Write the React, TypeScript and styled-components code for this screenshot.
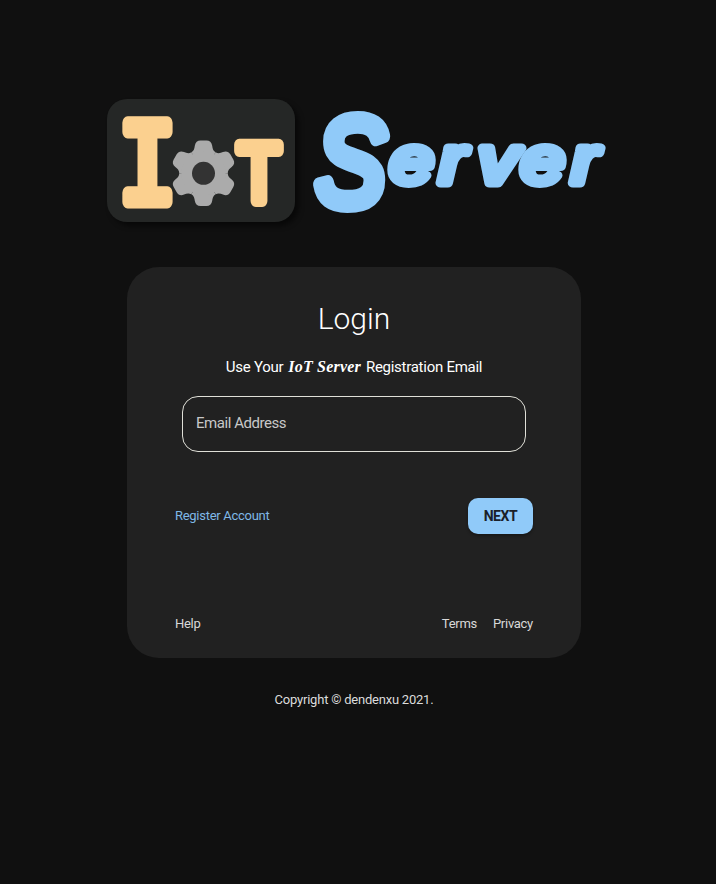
import React from "react";
import styled, { createGlobalStyle } from "styled-components";

const GlobalStyle = createGlobalStyle`
  * { box-sizing: border-box; }
  html, body { margin: 0; padding: 0; background: #101010; }
  body { font-family: Roboto, "Liberation Sans", sans-serif; color: #fff; }
`;

const Page = styled.main`
  width: 708px;
  min-height: 884px;
  padding-top: 99px;
  display: flex;
  flex-direction: column;
  align-items: center;
`;

const Brand = styled.header`
  display: flex;
  gap: 13px;
  width: 494px;
  height: 123px;
`;

const Emblem = styled.div`
  flex: none;
  width: 188px;
  height: 123px;
  border-radius: 20px;
  background: #252726;
  box-shadow: 4px 4px 5px rgba(0, 0, 0, 0.5);
`;

const Drawing = styled.svg`
  display: block;
  flex: none;
  overflow: visible;
`;

const Slab = styled.text`
  fill: #fbd08f;
  stroke: #fbd08f;
  stroke-linejoin: round;
`;

const Script = styled.text`
  fill: #90caf9;
  stroke: #90caf9;
  stroke-linejoin: round;
  stroke-linecap: round;
  font-family: "Liberation Sans", Arial, sans-serif;
  font-style: italic;
`;

const Card = styled.section`
  width: 454px;
  height: 391px;
  margin-top: 45px;
  padding: 33px 48px 0;
  border-radius: 32px;
  background: #212121;
`;

const Title = styled.h1`
  margin: 0;
  font-size: 30px;
  line-height: 38px;
  font-weight: 300;
  text-align: center;
`;

const Subtitle = styled.p`
  display: flex;
  justify-content: center;
  align-items: center;
  gap: 5px;
  height: 24px;
  margin: 17px 0 0;
  font-size: 15px;
  letter-spacing: -0.27px;
  white-space: nowrap;
`;

const BrandName = styled.em`
  font: italic 700 16px "Liberation Serif", serif;
  letter-spacing: 0.2px;
`;

const EmailInput = styled.input`
  display: block;
  width: 344px;
  height: 56px;
  margin: 17px 0 0 7px;
  padding: 0 13px 2px;
  border: 1px solid #e0e0d8;
  border-radius: 16px;
  outline: none;
  background: transparent;
  color: #fff;
  font: 400 15px Roboto, sans-serif;
  letter-spacing: -0.45px;
  &::placeholder { color: #c8c8c8; opacity: 1; }
`;

const Row = styled.div<{ $top: number; $height: number }>`
  display: flex;
  align-items: center;
  justify-content: space-between;
  height: ${(p) => p.$height}px;
  margin-top: ${(p) => p.$top}px;
`;

const Links = styled.nav`
  display: flex;
  gap: 16px;
`;

const TextLink = styled.a<{ $accent?: boolean }>`
  color: ${(p) => (p.$accent ? "#7fb8e6" : "#d8d8d8")};
  font-size: 13px;
  line-height: 20px;
  letter-spacing: -0.28px;
  text-decoration: none;
`;

const NextButton = styled.button`
  width: 65px;
  height: 36px;
  padding: 0 0 1px;
  border: 0;
  border-radius: 10px;
  background: #90caf9;
  box-shadow: 0 2px 3px rgba(0, 0, 0, 0.3);
  color: #1a2028;
  font: 700 14px Roboto, sans-serif;
  letter-spacing: -0.4px;
`;

const Copyright = styled.footer`
  margin-top: 32px;
  color: #dcdcdc;
  font-size: 13px;
  line-height: 20px;
  letter-spacing: -0.22px;
`;

const TOOTH =
  "M0 0L-12.1 -21C-9.5 -22.5 -9 -25 -8.7 -27.5C-8.2 -31 -6 -32.7 -3 -32.7L3 -32.7C6 -32.7 8.2 -31 8.7 -27.5C9 -25 9.5 -22.5 12.1 -21Z";

const Gear = () => (
  <g transform="translate(96.5 74.3)" fill="#ababab">
    {[0, 60, 120, 180, 240, 300].map((angle) => (
      <path key={angle} d={TOOTH} transform={`rotate(${angle})`} />
    ))}
    <circle r="22" />
    <circle r="11.5" fill="#333" />
  </g>
);

export default function App() {
  return (
    <>
      <GlobalStyle />
      <Page>
        <Brand>
          <Emblem>
            <Drawing width="188" height="123" viewBox="0 0 188 123">
              <Slab
                transform="translate(40.5 102.5) scale(0.82 1)"
                textAnchor="middle"
                fontFamily="Liberation Mono"
                fontSize="120"
                strokeWidth="13"
              >
                I
              </Slab>
              <Gear />
              <Slab
                transform="translate(152 102) scale(0.86 1)"
                textAnchor="middle"
                fontFamily="Liberation Sans"
                fontSize="81"
                strokeWidth="12"
              >
                T
              </Slab>
            </Drawing>
          </Emblem>
          <Drawing width="293" height="123" viewBox="0 0 293 123">
            <Script transform="translate(8 105.5) scale(0.84 1)" fontSize="124" strokeWidth="14">
              S
            </Script>
            <Script
              transform="translate(0 83.5) scale(1.18 1)"
              x="69.5 111.5 144.5 180.5 223.5"
              fontSize="66"
              strokeWidth="9"
            >
              erver
            </Script>
          </Drawing>
        </Brand>
        <Card>
          <Title>Login</Title>
          <Subtitle>
            <span>Use Your</span>
            <BrandName>IoT Server</BrandName>
            <span>Registration Email</span>
          </Subtitle>
          <EmailInput type="email" placeholder="Email Address" />
          <Row $top={46} $height={36}>
            <TextLink $accent>Register Account</TextLink>
            <NextButton>NEXT</NextButton>
          </Row>
          <Row $top={80} $height={20}>
            <TextLink>Help</TextLink>
            <Links>
              <TextLink>Terms</TextLink>
              <TextLink>Privacy</TextLink>
            </Links>
          </Row>
        </Card>
        <Copyright>Copyright © dendenxu 2021.</Copyright>
      </Page>
    </>
  );
}
